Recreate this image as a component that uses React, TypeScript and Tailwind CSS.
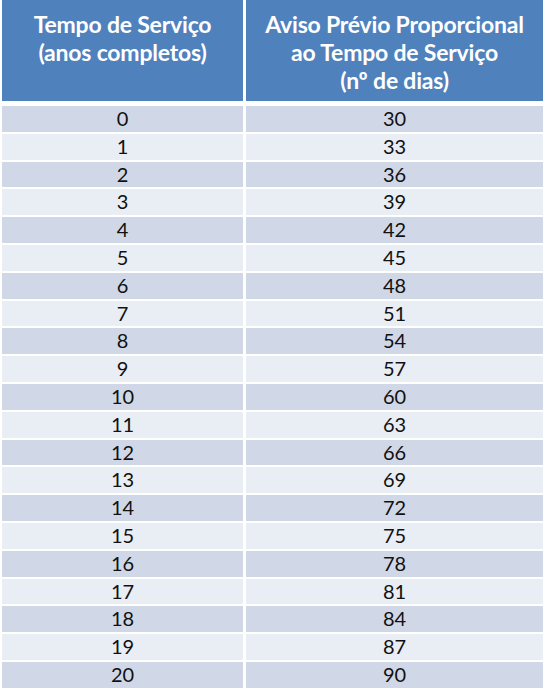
import React from 'react';

const rows = Array.from({ length: 21 }, (_, i) => ({ anos: i, dias: 30 + i * 3 }));

export default function App() {
    return (
        <div className="w-[549px] h-[693px] bg-white pl-[2px] pr-[6px]" style={{ fontFamily: 'Lato, "Open Sans", sans-serif' }}>
            <div className="grid grid-cols-[241px_297px] gap-x-[3px]">
                <div className="h-[101px] bg-[#4f81bd] text-white font-bold text-[23px] leading-[28px] text-center pt-[10px] tracking-[-0.2px]">
                    Tempo de Serviço
                    <br />
                    (anos completos)
                </div>
                <div className="h-[101px] bg-[#4f81bd] text-white font-bold text-[23px] leading-[28px] text-center pt-[10px] tracking-[-0.2px]">
                    Aviso Prévio Proporcional
                    <br />
                    ao Tempo de Serviço
                    <br />
                    (nº de dias)
                </div>
            </div>
            <div className="mt-[5px] flex flex-col gap-y-[2px]">
                {rows.map((r) => (
                    <div key={r.anos} className="grid grid-cols-[241px_297px] gap-x-[3px] text-[20px] text-[#111] text-center">
                        <div className={`h-[25.8px] leading-[25.8px] ${r.anos % 2 === 0 ? 'bg-[#d0d8e8]' : 'bg-[#e9edf4]'}`}>{r.anos}</div>
                        <div className={`h-[25.8px] leading-[25.8px] ${r.anos % 2 === 0 ? 'bg-[#d0d8e8]' : 'bg-[#e9edf4]'}`}>{r.dias}</div>
                    </div>
                ))}
            </div>
        </div>
    );
}
